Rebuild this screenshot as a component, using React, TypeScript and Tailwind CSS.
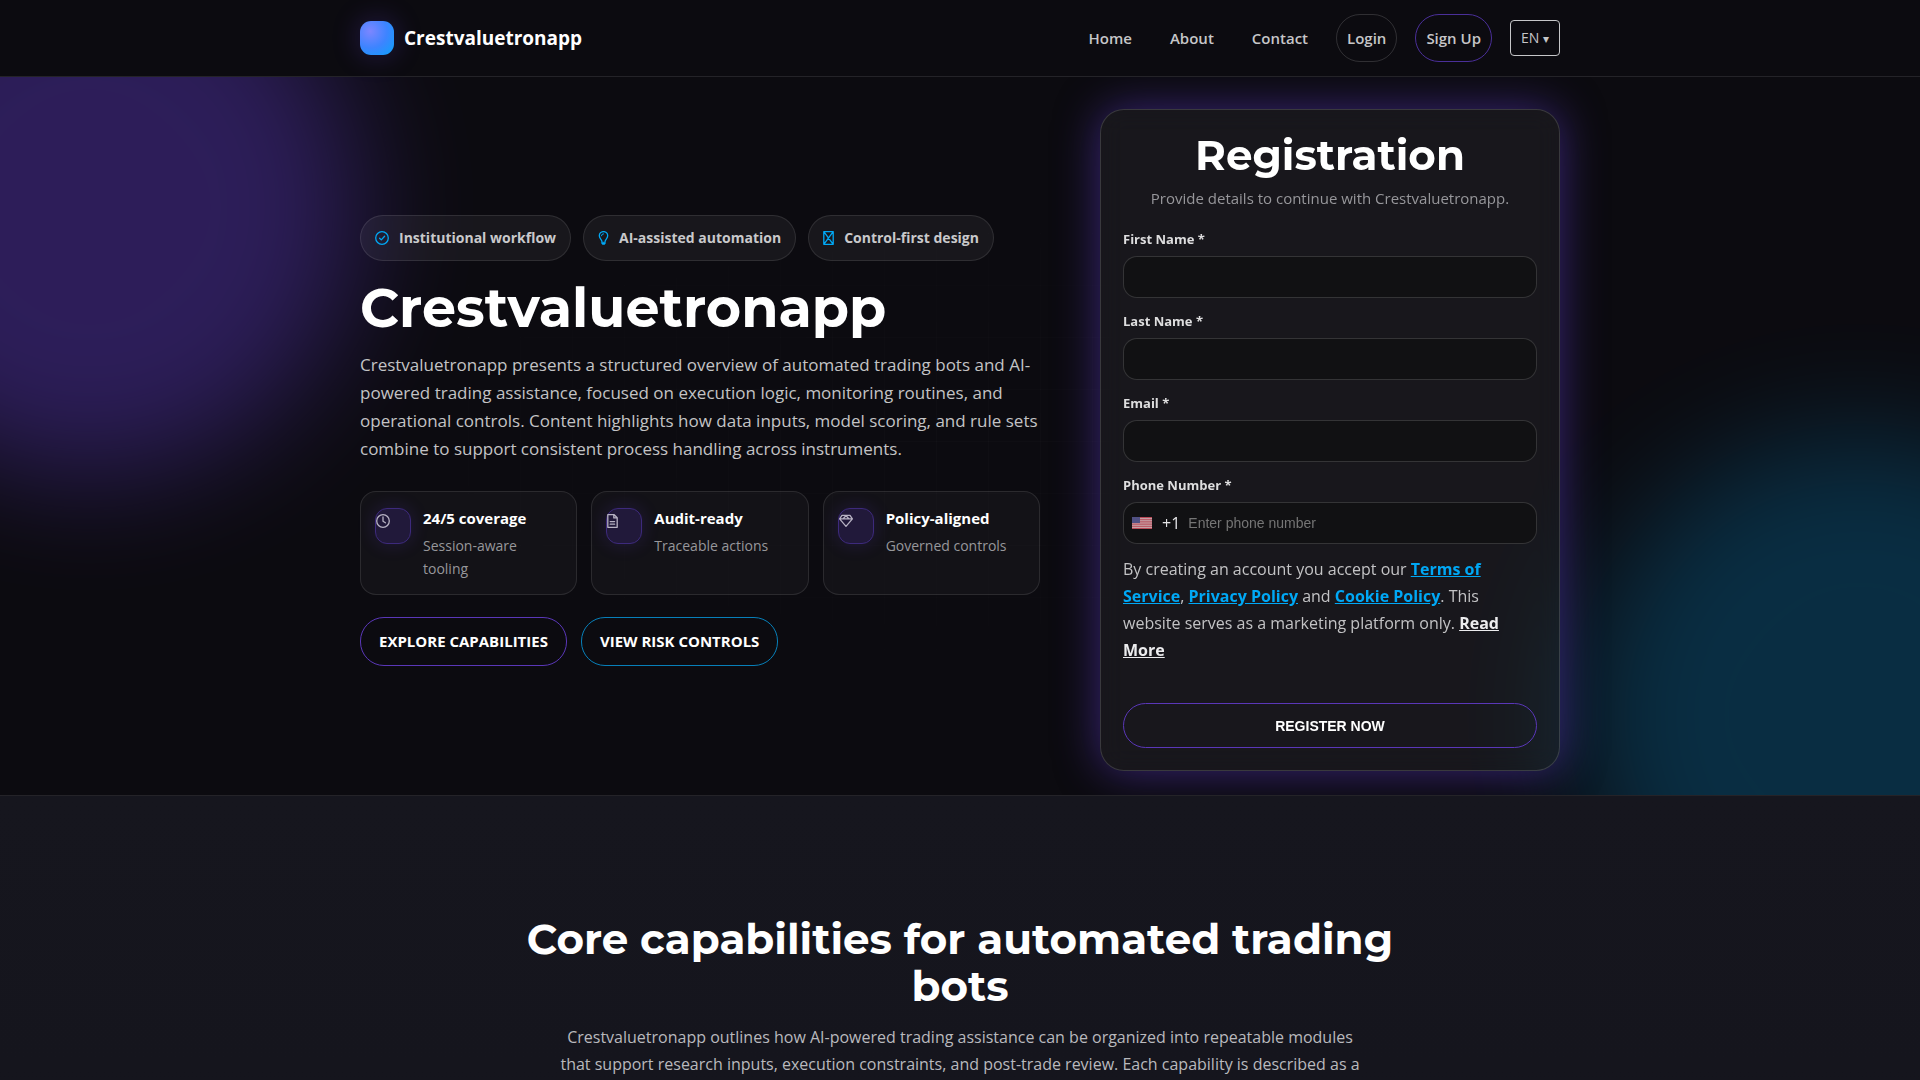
import type { ReactNode } from "react";

const navLinks = ["Home", "About", "Contact"];

const chips = [
  { label: "Institutional workflow", icon: <CheckIcon /> },
  { label: "AI-assisted automation", icon: <BulbIcon /> },
  { label: "Control-first design", icon: <CrossBoxIcon /> },
];

const highlights = [
  { title: "24/5 coverage", text: "Session-aware tooling", icon: <ClockIcon /> },
  { title: "Audit-ready", text: "Traceable actions", icon: <FileIcon /> },
  { title: "Policy-aligned", text: "Governed controls", icon: <GemIcon /> },
];

const fields = [
  { id: "first-name", label: "First Name *", type: "text" },
  { id: "last-name", label: "Last Name *", type: "text" },
  { id: "email", label: "Email *", type: "email" },
];

function Icon({ width = 14, children }: { width?: number; children: ReactNode }) {
  return (
    <svg width={width} height="14" viewBox={`0 0 ${width} 14`} fill="none" stroke="currentColor" strokeWidth="1.3" strokeLinecap="round" strokeLinejoin="round" className="shrink-0" aria-hidden="true">
      {children}
    </svg>
  );
}

function CheckIcon() {
  return (
    <Icon>
      <circle cx="7" cy="7" r="6.3" />
      <path d="M4.6 7.2 6.3 8.9 9.6 5.2" />
    </Icon>
  );
}

function BulbIcon() {
  return (
    <Icon width={11}>
      <path d="M3.9 10.6C3.9 8.6 1.3 7.4 1.3 4.8A4.2 4.2 0 0 1 9.7 4.8C9.7 7.4 7.1 8.6 7.1 10.6" />
      <path d="M3.4 4.8A2.1 2.1 0 0 1 5.5 2.8" strokeWidth="1" />
      <path d="M3.7 11.2h3.6v1l-.8 1.4h-2l-.8-1.4Z" fill="currentColor" strokeWidth=".6" />
    </Icon>
  );
}

function CrossBoxIcon() {
  return (
    <Icon width={11}>
      <path d="M.8.7h9.4v12.6H.8ZM.8.7l9.4 12.6M10.2.7.8 13.3" />
    </Icon>
  );
}

function ClockIcon() {
  return (
    <Icon>
      <circle cx="7" cy="7" r="6.3" />
      <path d="M7 3v4.2L9.4 8.8" />
    </Icon>
  );
}

function FileIcon() {
  return (
    <Icon width={11}>
      <path d="M.8.7h6.4l3 3v9.6H.8ZM6.8.9v3h3M3.2 7.6h4.4M3.2 10.2h4.4" />
    </Icon>
  );
}

function GemIcon() {
  return (
    <Icon>
      <path d="M3 1.4h8l2.4 3.4L7 12.4.6 4.8ZM.8 4.8h12.4M4.2 4.8 7 1.6l2.8 3.2" />
    </Icon>
  );
}

function FlagUS() {
  return (
    <svg width="20" height="12" viewBox="0 0 20 12" className="shrink-0 opacity-80" role="img" aria-label="United States">
      <rect width="20" height="12" fill="#f8dfe3" />
      <path d="M0 .5h20M0 2.3h20M0 4.2h20M0 6h20M0 7.8h20M0 9.7h20M0 11.5h20" stroke="#e0485a" strokeWidth=".9" />
      <rect width="8" height="6" fill="#6060a0" />
    </svg>
  );
}

function Header() {
  return (
    <header className="relative z-10 border-b border-white/10 bg-[#0c0b10]">
      <div className="mx-auto flex h-[76px] max-w-[1200px] items-center justify-between">
        <a href="#" className="flex items-center gap-2.5 text-[19px] font-bold text-white">
          <span className="size-[34px] rounded-[11px] bg-[radial-gradient(circle_at_30%_30%,#7c86ff_0%,#3d84ff_50%,#0ba2fb_100%)] shadow-[0_0_28px_rgba(99,62,220,0.3)]" />
          Crestvaluetronapp
        </a>
        <nav className="flex items-center gap-[18px] text-[15px] leading-[22px] font-semibold text-[#c6c6c8]">
          {navLinks.map((link) => (
            <a key={link} href="#" className="px-2.5 py-3">
              {link}
            </a>
          ))}
          <a href="#" className="rounded-3xl border border-white/15 px-2.5 py-3">
            Login
          </a>
          <a href="#" className="rounded-3xl border border-[#4a2f99] px-2.5 py-3">
            Sign Up
          </a>
          <button type="button" className="h-9 rounded border border-[#c6c6c8] px-2.5 text-sm font-normal">
            EN <span className="text-xs">▾</span>
          </button>
        </nav>
      </div>
    </header>
  );
}

function Intro() {
  return (
    <div>
      <ul className="flex gap-3">
        {chips.map(({ label, icon }) => (
          <li key={label} className="flex items-center gap-2.5 rounded-3xl border border-white/10 bg-white/5 px-3.5 py-2.5 text-sm leading-6 font-bold text-[#c9c9cb]">
            <span className="text-[#00a8f5]">{icon}</span>
            {label}
          </li>
        ))}
      </ul>
      <h1 className="mt-[18px] font-['Montserrat','Inter',sans-serif] text-[54px] leading-[58px] font-bold text-white">Crestvaluetronapp</h1>
      <p className="mt-3.5 text-[17px] leading-[28px] text-[#c3c3c5]">
        Crestvaluetronapp presents a structured overview of automated trading bots and AI-powered trading assistance, focused on execution logic, monitoring routines, and operational controls. Content highlights how data inputs, model scoring, and rule sets combine to support consistent process handling across instruments.
      </p>
      <ul className="mt-7 grid grid-cols-3 gap-3.5">
        {highlights.map(({ title, text, icon }) => (
          <li key={title} className="flex gap-3 rounded-2xl border border-white/10 bg-white/[0.03] p-3.5">
            <span className="mt-0.5 size-9 shrink-0 rounded-xl border border-[#3d2a7c] bg-[#21193a] pt-[5px] text-[#b7b2c3] shadow-[0_0_18px_rgba(99,62,220,0.2)]">{icon}</span>
            <div>
              <h3 className="text-[15px] leading-6 font-bold text-white">{title}</h3>
              <p className="mt-1 text-sm leading-[23px] text-[#97979b]">{text}</p>
            </div>
          </li>
        ))}
      </ul>
      <div className="mt-[22px] flex gap-3.5 text-[15px] leading-[19px] font-bold text-white uppercase">
        <a href="#" className="rounded-3xl border border-[#5a37b8] px-[18px] py-3.5">
          Explore capabilities
        </a>
        <a href="#" className="rounded-3xl border border-[#077fb9] px-[18px] py-3.5">
          View risk controls
        </a>
      </div>
    </div>
  );
}

function RegistrationCard() {
  return (
    <form className="rounded-3xl border border-white/15 bg-white/5 p-[22px] shadow-[0_0_44px_rgba(99,62,220,0.5)] backdrop-blur-md">
      <h2 className="text-center font-['Montserrat','Inter',sans-serif] text-[42px] leading-[46px] font-bold text-white">Registration</h2>
      <p className="mt-2 text-center text-[15px] leading-6 text-[#97979b]">Provide details to continue with Crestvaluetronapp.</p>
      <div className="mt-[18px] flex flex-col gap-3">
        {fields.map(({ id, label, type }) => (
          <div key={id}>
            <label htmlFor={id} className="mb-1.5 block text-[13px] leading-[22px] font-bold text-[#dededf]">
              {label}
            </label>
            <input id={id} type={type} className="block h-[42px] w-full rounded-[14px] border border-white/15 bg-[#111113] px-3 text-white" />
          </div>
        ))}
        <div>
          <label htmlFor="phone" className="mb-1.5 block text-[13px] leading-[22px] font-bold text-[#dededf]">
            Phone Number *
          </label>
          <div className="flex h-[42px] items-center rounded-[14px] border border-white/15 bg-[#111113] px-2">
            <FlagUS />
            <span className="ml-2.5 text-[#e4e4e6]">+1</span>
            <input id="phone" type="tel" placeholder="Enter phone number" className="ml-2 w-full font-['Liberation_Sans',sans-serif] text-sm text-white placeholder:text-[#757575]" />
          </div>
        </div>
      </div>
      <p className="mt-3 text-base leading-[27px] text-[#c3c3c5]">
        By creating an account you accept our <PolicyLink>Terms of Service</PolicyLink>, <PolicyLink>Privacy Policy</PolicyLink> and <PolicyLink>Cookie Policy</PolicyLink>. This website serves as a marketing platform only.{" "}
        <a href="#" className="font-bold text-[#ececee] underline">
          Read More
        </a>
      </p>
      <button type="submit" className="mt-[39px] h-[45px] w-full rounded-3xl border border-[#5a37b8] font-['Liberation_Sans',sans-serif] text-sm font-bold text-white uppercase">
        Register now
      </button>
    </form>
  );
}

function PolicyLink({ children }: { children: ReactNode }) {
  return (
    <a href="#" className="font-bold text-[#00a8f5] underline">
      {children}
    </a>
  );
}

export default function App() {
  return (
    <div className="h-screen overflow-hidden bg-[#0c0b10] font-['Open_Sans','Noto_Sans',sans-serif]">
      <Header />
      <main>
        <section className="relative overflow-hidden border-b border-white/10">
          {/* Background glows and grid */}
          <div className="absolute -top-[140px] -left-[180px] size-[540px] rounded-full bg-[#6a41e1] opacity-35 blur-[60px]" />
          <div className="absolute -right-[220px] -bottom-[200px] size-[560px] rounded-full bg-[#00a8f5] opacity-22 blur-[60px]" />
          <div className="absolute inset-0 bg-[linear-gradient(to_right,rgba(255,255,255,0.015)_1px,transparent_1px),linear-gradient(to_bottom,rgba(255,255,255,0.015)_1px,transparent_1px)] bg-size-[52px_52px] mask-radial-from-0% mask-radial-to-60%" />
          <div className="relative mx-auto grid max-w-[1200px] grid-cols-[680px_minmax(0,1fr)] items-center gap-[60px] pt-8 pb-6">
            <Intro />
            <RegistrationCard />
          </div>
        </section>
        <section className="min-h-screen bg-linear-to-b from-[#16161e] to-[#12121a] pt-[120px]">
          <div className="mx-auto max-w-[900px] text-center">
            <h2 className="font-['Montserrat','Inter',sans-serif] text-[42px] leading-[47px] font-bold text-white">Core capabilities for automated trading bots</h2>
            <p className="mx-auto mt-3.5 max-w-[810px] text-base leading-[27px] text-[#b9b9bd]">
              Crestvaluetronapp outlines how AI-powered trading assistance can be organized into repeatable modules that support research inputs, execution constraints, and post-trade review. Each capability is described as a
            </p>
          </div>
        </section>
      </main>
    </div>
  );
}
